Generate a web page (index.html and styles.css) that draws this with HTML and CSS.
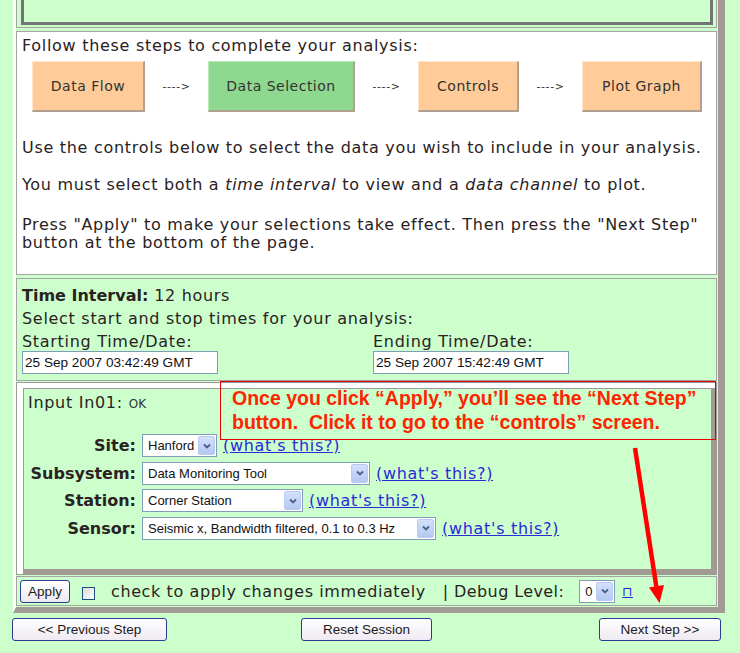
FILE: index.html
```html
<!DOCTYPE html>
<html lang="en">
<head>
<meta charset="utf-8">
<title>Data Selection</title>
<link rel="stylesheet" href="styles.css">
</head>
<body>
<div class="frame">
  <div class="cell top"><div class="topbox"></div></div>

  <div class="cell intro">
    <p class="lead">Follow these steps to complete your analysis:</p>
    <div class="steps">
      <div class="step w1">Data Flow</div><span class="sep">----&gt;</span>
      <div class="step w2 current">Data Selection</div><span class="sep">----&gt;</span>
      <div class="step w3">Controls</div><span class="sep">----&gt;</span>
      <div class="step w4">Plot Graph</div>
    </div>
    <p class="p1">Use the controls below to select the data you wish to include in your analysis.</p>
    <p class="p2">You must select both a <i>time interval</i> to view and a <i>data channel</i> to plot.</p>
    <p class="p3">Press "Apply" to make your selections take effect. Then press the "Next Step"<br>button at the bottom of the page.</p>
  </div>

  <div class="cell time">
    <div class="tline"><b>Time Interval:</b> 12 hours</div>
    <div class="tline">Select start and stop times for your analysis:</div>
    <div class="tgrid">
      <div class="tcol">
        <div class="tline">Starting Time/Date:</div>
        <input class="tin" type="text" value="25 Sep 2007 03:42:49 GMT">
      </div>
      <div class="tcol">
        <div class="tline">Ending Time/Date:</div>
        <input class="tin" type="text" value="25 Sep 2007 15:42:49 GMT">
      </div>
    </div>
  </div>

  <div class="cell inputcell">
    <div class="inputbox">
      <div class="ihead">Input In01: <span class="ok">OK</span></div>
      <div class="form">
        <span class="lbl">Site:</span>
        <div class="fld"><span class="select ws1"><span class="sv">Hanford</span><span class="sa"><svg viewBox="0 0 10 10" width="10" height="10"><path d="M2 3.5 L5 6.5 L8 3.5" fill="none" stroke="#4a5f8c" stroke-width="1.8"/></svg></span></span><a class="wt" href="#">(what's this?)</a></div>
        <span class="lbl">Subsystem:</span>
        <div class="fld"><span class="select ws2"><span class="sv">Data Monitoring Tool</span><span class="sa"><svg viewBox="0 0 10 10" width="10" height="10"><path d="M2 3.5 L5 6.5 L8 3.5" fill="none" stroke="#4a5f8c" stroke-width="1.8"/></svg></span></span><a class="wt" href="#">(what's this?)</a></div>
        <span class="lbl">Station:</span>
        <div class="fld"><span class="select ws3"><span class="sv">Corner Station</span><span class="sa"><svg viewBox="0 0 10 10" width="10" height="10"><path d="M2 3.5 L5 6.5 L8 3.5" fill="none" stroke="#4a5f8c" stroke-width="1.8"/></svg></span></span><a class="wt" href="#">(what's this?)</a></div>
        <span class="lbl">Sensor:</span>
        <div class="fld"><span class="select ws4"><span class="sv">Seismic x, Bandwidth filtered, 0.1 to 0.3 Hz</span><span class="sa"><svg viewBox="0 0 10 10" width="10" height="10"><path d="M2 3.5 L5 6.5 L8 3.5" fill="none" stroke="#4a5f8c" stroke-width="1.8"/></svg></span></span><a class="wt" href="#">(what's this?)</a></div>
      </div>
    </div>
  </div>

  <div class="cell applyrow">
    <button class="applybtn" type="button">Apply</button>
    <span class="chk"></span>
    <span class="chktxt">check to apply changes immediately</span>
    <span class="debug">| Debug Level:</span>
    <span class="select ws5"><span class="sv">0</span><span class="sa"><svg viewBox="0 0 10 10" width="10" height="10"><path d="M2 3.5 L5 6.5 L8 3.5" fill="none" stroke="#4a5f8c" stroke-width="1.8"/></svg></span></span>
    <a class="dlink" href="#">⊓</a>
  </div>
</div>

<div class="navrow">
  <button class="nav nprev" type="button">&lt;&lt; Previous Step</button>
  <button class="nav nreset" type="button">Reset Session</button>
  <button class="nav nnext" type="button">Next Step &gt;&gt;</button>
</div>

<div class="callout">Once you click “Apply,” you’ll see the “Next Step”<br>button.&nbsp; Click it to go to the “controls” screen.</div>

<svg class="redarrow" width="60" height="170" viewBox="0 0 60 170">
  <line x1="15" y1="8" x2="36.4" y2="147" stroke="#ff0000" stroke-width="4.5"/>
  <polygon points="29,147.5 44,145 39.5,163" fill="#ff0000"/>
</svg>
</body>
</html>
```

FILE: styles.css
```css
* { box-sizing: border-box; }
html, body { margin: 0; padding: 0; }
body {
  position: relative;
  width: 740px;
  height: 653px;
  overflow: hidden;
  background: #ccffcc;
  font-family: "DejaVu Sans", Verdana, sans-serif;
  font-size: 16px;
  color: #2a2222;
}

.frame {
  margin-left: 13px;
  width: 712px;
  border-left: 3px solid #ffffff;
  border-right: 7px solid #a39a94;
  border-bottom: 6px solid #a39a94;
  padding: 0 1px 1px 0;
}

.cell { border: 1px solid #a4a4a4; }

.top {
  height: 28px;
  border-top: none;
  padding: 0 3px 2px 4px;
}
.topbox {
  height: 100%;
  border: 3px solid #747478;
  border-top: none;
}

.intro {
  margin-top: 3px;
  background: #ffffff;
  padding: 5px 2px 22px 5px;
  letter-spacing: 0.7px;
  line-height: 18px;
}
.intro p { margin: 0; white-space: nowrap; }
.steps {
  display: flex;
  align-items: center;
  margin: 6px 0 0 10px;
  height: 51px;
}
.step {
  height: 51px;
  display: flex;
  align-items: center;
  justify-content: center;
  background: #ffcc99;
  border-top: 1px solid #ffe6cc;
  border-left: 1px solid #ffe6cc;
  border-right: 2px solid #b0a090;
  border-bottom: 2px solid #b0a090;
  font-size: 14px;
  letter-spacing: 0.5px;
  color: #333333;
}
.step.current { background: #8fd88f; border-top-color: #b8eab8; border-left-color: #b8eab8; }
.w1 { width: 113px; }
.w2 { width: 147px; }
.w3 { width: 101px; }
.w4 { width: 120px; }
.sep {
  width: 63px;
  text-align: center;
  font-size: 11px;
  letter-spacing: 0.6px;
  color: #333333;
}
.intro .p1 { margin-top: 27px; }
.intro .p2 { margin-top: 19px; }
.intro .p3 { margin-top: 22px; }

.time {
  margin-top: 3px;
  padding: 5px 4px 6px 5px;
  letter-spacing: 0.7px;
}
.tline { line-height: 23px; height: 23px; white-space: nowrap; }
.time b { letter-spacing: 0; }
.tgrid { display: grid; grid-template-columns: 351px 1fr; }
.tin {
  display: block;
  margin: -2px 0 0 0;
  width: 196px;
  height: 23px;
  border: 1px solid #7f9db9;
  background: #ffffff;
  padding: 0 0 0 2px;
  font-family: "Liberation Sans", Arial, sans-serif;
  font-size: 13.6px;
  color: #111111;
  outline: none;
}

.inputcell {
  margin-top: 1px;
  border-color: #9a9a9a;
  background: #ffffff;
  padding: 5px 0 0 6px;
}
.inputbox {
  height: 186px;
  background: #ccffcc;
  border-top: 1px solid #9a9a9a;
  border-left: 1px solid #9a9a9a;
  border-right: 5px solid #a39a94;
  border-bottom: 5px solid #a39a94;
  padding: 2px 0 0 4px;
}
.ihead { line-height: 23px; height: 23px; letter-spacing: 0.7px; }
.ok { font-size: 12px; letter-spacing: 0.3px; color: #333333; }
.form {
  margin-top: 20px;
  display: grid;
  grid-template-columns: 108px 1fr;
  column-gap: 6px;
  row-gap: 4.5px;
}
.lbl {
  text-align: right;
  font-weight: bold;
  line-height: 23px;
  height: 23px;
}
.fld { display: flex; align-items: center; height: 23px; }

.select {
  display: inline-flex;
  align-items: stretch;
  height: 23px;
  border: 1px solid #7f9db9;
  background: #ffffff;
  font-family: "Liberation Sans", Arial, sans-serif;
  font-size: 13px;
  color: #111111;
  padding: 1px;
}
.sv { flex: 1; display: flex; align-items: center; padding-left: 4px; white-space: nowrap; overflow: hidden; }
.sa {
  width: 17px;
  background: linear-gradient(#d4e0fb, #b4c8f2);
  border: 1px solid #b9cbf0;
  border-radius: 2px;
  display: flex;
  align-items: center;
  justify-content: center;
}
.ws1 { width: 75px; }
.ws2 { width: 228px; }
.ws3 { width: 161px; }
.ws4 { width: 294px; }
.ws5 { width: 36px; height: 23px; }

.wt {
  margin-left: 6px;
  color: #2a2ad8;
  text-decoration: underline;
  letter-spacing: 0.7px;
  white-space: nowrap;
}

.applyrow {
  margin-top: 1px;
  height: 30px;
  display: flex;
  align-items: center;
  padding-left: 3px;
  letter-spacing: 0.6px;
}
.applybtn {
  width: 50px;
  height: 23px;
  margin: 0;
  padding: 0;
  border: 1px solid #27408b;
  border-radius: 3px;
  background: linear-gradient(#ffffff, #ece9f0);
  font-family: "Liberation Sans", Arial, sans-serif;
  font-size: 13.5px;
  color: #1a1a1a;
}
.chk {
  width: 13px;
  height: 13px;
  margin: 5px 0 0 12px;
  border: 1px solid #1c5180;
  background: linear-gradient(135deg, #dcdcd7, #ffffff);
}
.chktxt { margin-left: 16px; white-space: nowrap; }
.debug { margin-left: 17px; white-space: nowrap; letter-spacing: 0.4px; }
.applyrow .select { margin-left: 15px; }
.dlink {
  margin-left: 7px;
  font-size: 13px;
  color: #2a2ad8;
  text-decoration: underline;
}

.navrow {
  display: flex;
  padding: 0 19px 0 12px;
  margin-top: 5px;
}
.nav {
  height: 23px;
  margin: 0;
  padding: 0;
  border: 1px solid #2b3c8e;
  border-radius: 3px;
  background: linear-gradient(#ffffff, #efeaf2);
  font-family: "Liberation Sans", Arial, sans-serif;
  font-size: 13.5px;
  color: #1a1a1a;
}
.nprev { width: 155px; }
.nreset { width: 131px; margin-left: 134px; }
.nnext { width: 122px; margin-left: auto; }

.callout {
  position: absolute;
  left: 220px;
  top: 381px;
  width: 496px;
  height: 59px;
  border: 1px solid #e00000;
  padding: 4px 0 0 11px;
  font-family: "Liberation Sans", Arial, sans-serif;
  font-weight: bold;
  font-size: 19.5px;
  line-height: 24px;
  color: #ff2400;
  white-space: nowrap;
}

.redarrow {
  position: absolute;
  left: 620px;
  top: 440px;
}
```
